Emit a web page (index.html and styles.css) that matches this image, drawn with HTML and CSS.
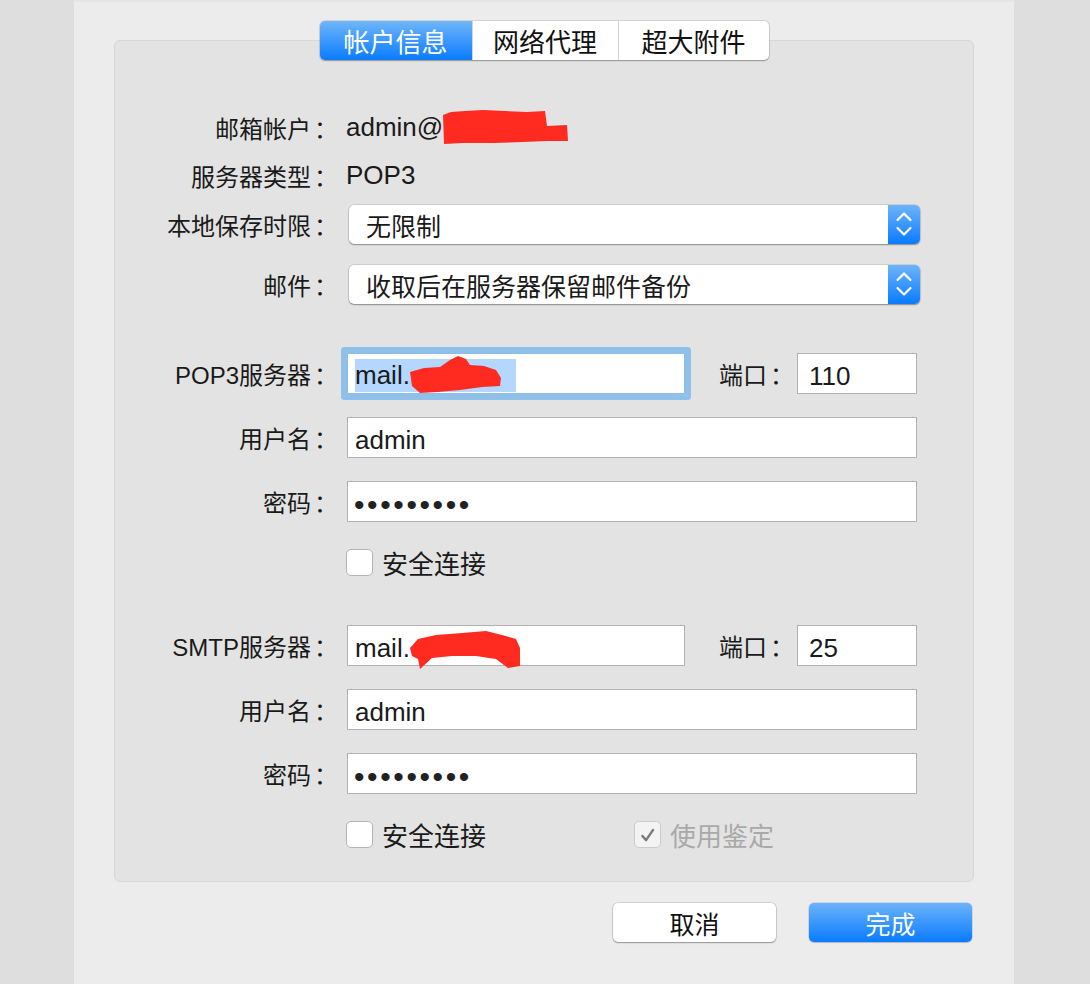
FILE: index.html
```html
<!DOCTYPE html>
<html lang="zh-CN">
<head>
<meta charset="utf-8">
<title>帐户信息</title>
<link rel="stylesheet" href="styles.css">
</head>
<body>
<div class="window">
  <div class="tabs">
    <div class="tabgroup">
      <div class="tab t1 active">帐户信息</div>
      <div class="tab t2">网络代理</div>
      <div class="tab t3">超大附件</div>
    </div>
  </div>

  <div class="panel">
    <div class="row text-row">
      <div class="lbl">邮箱帐户<span class="colon">：</span></div>
      <div class="val">admin@<svg class="redact rd1" width="126" height="34" viewBox="0 0 126 34"><path d="M0,5 L8,2 L22,1 L40,0 L62,1 L84,2 L102,1 L104,16 L124,15 L125,31 L104,31 L80,32 L50,33 L20,33 L1,34 Z" fill="#ff2a20"/></svg></div>
    </div>
    <div class="row text-row">
      <div class="lbl">服务器类型<span class="colon">：</span></div>
      <div class="val">POP3</div>
    </div>
    <div class="row sel-row first-sel">
      <div class="lbl">本地保存时限<span class="colon">：</span></div>
      <div class="select">
        <span class="sel-text">无限制</span>
        <span class="stepper"><svg width="32" height="39" viewBox="0 0 32 39"><path d="M9.5,15 L16,8.5 L22.5,15 M9.5,23 L16,29.5 L22.5,23" fill="none" stroke="#fff" stroke-width="2.2" stroke-linecap="round" stroke-linejoin="round"/></svg></span>
      </div>
    </div>
    <div class="row sel-row second-sel">
      <div class="lbl">邮件<span class="colon">：</span></div>
      <div class="select">
        <span class="sel-text">收取后在服务器保留邮件备份</span>
        <span class="stepper"><svg width="32" height="39" viewBox="0 0 32 39"><path d="M9.5,15 L16,8.5 L22.5,15 M9.5,23 L16,29.5 L22.5,23" fill="none" stroke="#fff" stroke-width="2.2" stroke-linecap="round" stroke-linejoin="round"/></svg></span>
      </div>
    </div>

    <div class="row in-row group-start">
      <div class="lbl">POP3服务器<span class="colon">：</span></div>
      <div class="input server focused"><span class="selection">mail.<svg class="redact rd2" width="106" height="38" viewBox="0 0 106 38"><path d="M0,16 L14,12 L30,11 L40,4 L48,0 L56,3 L60,9 L74,10 L86,14 L91,22 L90,30 L72,31 L50,34 L28,36 L10,37 L2,30 Z" fill="#ff2a20"/></svg></span></div>
      <div class="port-lbl">端口<span class="colon">：</span></div>
      <div class="input port">110</div>
    </div>
    <div class="row in-row">
      <div class="lbl">用户名<span class="colon">：</span></div>
      <div class="input full">admin</div>
    </div>
    <div class="row in-row">
      <div class="lbl">密码<span class="colon">：</span></div>
      <div class="input full pw">•••••••••</div>
    </div>
    <div class="row cb-row">
      <div class="lbl"></div>
      <label class="check"><span class="box"></span>安全连接</label>
    </div>

    <div class="row in-row group-start">
      <div class="lbl">SMTP服务器<span class="colon">：</span></div>
      <div class="input server">mail.<svg class="redact rd3" width="112" height="44" viewBox="0 0 112 44"><path d="M0,22 L8,13 L26,9 L52,7 L76,5 L92,9 L106,13 L110,22 L110,40 L98,42 L86,33 L66,30 L42,30 L22,32 L10,43 L8,33 L2,30 Z" fill="#ff2a20"/></svg></div>
      <div class="port-lbl">端口<span class="colon">：</span></div>
      <div class="input port">25</div>
    </div>
    <div class="row in-row">
      <div class="lbl">用户名<span class="colon">：</span></div>
      <div class="input full">admin</div>
    </div>
    <div class="row in-row">
      <div class="lbl">密码<span class="colon">：</span></div>
      <div class="input full pw">•••••••••</div>
    </div>
    <div class="row cb-row">
      <div class="lbl"></div>
      <label class="check"><span class="box"></span>安全连接</label>
      <label class="check disabled"><span class="box checked"><svg width="27" height="27" viewBox="0 0 27 27"><path d="M8,14 L12,18.5 L19.5,7.5" fill="none" stroke="#7a7a7a" stroke-width="2.6" stroke-linecap="round" stroke-linejoin="round"/></svg></span>使用鉴定</label>
    </div>
  </div>

  <div class="buttons">
    <button class="btn cancel">取消</button>
    <button class="btn primary">完成</button>
  </div>
</div>
</body>
</html>
```

FILE: styles.css
```css
html, body {
  margin: 0;
  padding: 0;
}

body {
  background: #dedede;
  font-family: "Liberation Sans", "Noto Sans CJK SC", sans-serif;
  color: #1a1a1a;
}

.window {
  margin-left: 74px;
  width: 940px;
  min-height: 984px;
  box-sizing: border-box;
  background: #ececec;
  border-top: 2px solid #e4e4e4;
  padding: 19px 40px 0;
}

/* Tabs */
.tabs {
  display: flex;
  justify-content: center;
  position: relative;
  z-index: 1;
}

.tabgroup {
  display: flex;
  height: 39px;
  background: #fff;
  border-radius: 5px;
  box-shadow: 0 0 0 1px rgba(0, 0, 0, 0.10), 0 1px 1.5px rgba(0, 0, 0, 0.28);
}

.tab {
  display: flex;
  align-items: center;
  justify-content: center;
  font-size: 26px;
  color: #111;
  font-family: "Noto Sans CJK SC", sans-serif;
}

.tab + .tab {
  border-left: 1px solid #d4d4d4;
}

.t1 { width: 152px; }
.t2 { width: 145px; }
.t3 { width: 150px; }

.tab.active {
  color: #fff;
  background: linear-gradient(#6fb6fa, #0a7bff);
  border-radius: 5px 0 0 5px;
}

/* Panel */
.panel {
  margin-top: -20px;
  background: #e3e3e3;
  border: 1px solid #d7d7d7;
  border-radius: 6px;
  padding: 62px 0 33px;
}

.row {
  display: flex;
  align-items: center;
}

.lbl {
  width: 223px;
  flex: none;
  text-align: right;
  font-size: 24px;
  white-space: nowrap;
}

.colon {
  font-family: "Noto Sans CJK JP", sans-serif;
  padding-left: 3px;
}

.text-row {
  height: 48px;
}

.val {
  margin-left: 8px;
  font-size: 26px;
  display: flex;
  align-items: center;
}

.redact {
  display: block;
  flex: none;
}

/* Selects */
.sel-row { height: 39px; }
.first-sel { margin-top: 6px; }
.second-sel { margin-top: 21px; }

.select {
  margin-left: 11px;
  width: 571px;
  height: 39px;
  box-sizing: border-box;
  display: flex;
  align-items: center;
  background: #fff;
  border-radius: 5px;
  box-shadow: 0 0 0 0.5px rgba(0, 0, 0, 0.18), 0 1px 1.5px rgba(0, 0, 0, 0.32);
  overflow: hidden;
}

.sel-text {
  flex: 1;
  padding-left: 17px;
  font-size: 25px;
  font-family: "Noto Sans CJK SC", sans-serif;
}

.stepper {
  width: 32px;
  height: 39px;
  flex: none;
  background: linear-gradient(#6cb4fa, #0a7bff);
  display: flex;
}

/* Inputs */
.in-row {
  height: 41px;
  margin-top: 23px;
}

.in-row.group-start {
  margin-top: 49px;
}

.input {
  height: 41px;
  box-sizing: border-box;
  background: #fff;
  border: 1px solid #b1b1b1;
  font-size: 26px;
  display: flex;
  align-items: center;
  padding: 5px 0 0 7px;
  color: #1a1a1a;
  white-space: nowrap;
}

.input.full {
  margin-left: 9px;
  width: 570px;
}

.input.server {
  margin-left: 9px;
  width: 338px;
}

.input.focused {
  border-color: #8ebde8;
  box-shadow: 0 0 0 6px #8fc0ea;
  border-radius: 1px;
  padding-top: 3px;
}

.selection {
  display: flex;
  align-items: center;
  background: #b3d7fe;
  height: 33px;
}

.port-lbl {
  margin-left: 34px;
  font-size: 24px;
  width: 78px;
  flex: none;
}

.input.port {
  width: 120px;
  padding-left: 11px;
}

.input.pw {
  font-size: 30px;
  letter-spacing: 2.6px;
  padding-left: 6px;
  padding-top: 6px;
  line-height: 1;
  color: #222;
}

/* Checkboxes */
.cb-row {
  height: 27px;
  margin-top: 27px;
}

.check {
  margin-left: 8px;
  display: flex;
  align-items: center;
  font-size: 26px;
  font-family: "Noto Sans CJK SC", sans-serif;
  color: #1a1a1a;
}

.check .box {
  width: 27px;
  height: 27px;
  box-sizing: border-box;
  background: #fff;
  border: 1px solid #b4b4b4;
  border-radius: 5px;
  margin-right: 9px;
  display: flex;
}

.check.disabled {
  margin-left: 148px;
  color: #a9a9a9;
}

.check.disabled .box {
  border-color: #cccccc;
  background: #f3f3f3;
}

/* Buttons */
.buttons {
  display: flex;
  justify-content: flex-end;
  gap: 33px;
  margin-top: 21px;
  padding-right: 2px;
}

.btn {
  width: 163px;
  height: 39px;
  border: none;
  border-radius: 5px;
  font-size: 25px;
  font-family: "Noto Sans CJK SC", sans-serif;
  padding: 0;
}

.btn.cancel {
  background: #fff;
  color: #111;
  box-shadow: 0 0 0 0.5px rgba(0, 0, 0, 0.2), 0 1px 1.5px rgba(0, 0, 0, 0.3);
}

.btn.primary {
  color: #fff;
  background: linear-gradient(#6bb3f9, #0a7bff);
  box-shadow: 0 0 0 0.5px rgba(0, 60, 180, 0.25), 0 1px 1px rgba(0, 0, 0, 0.15);
}
```
